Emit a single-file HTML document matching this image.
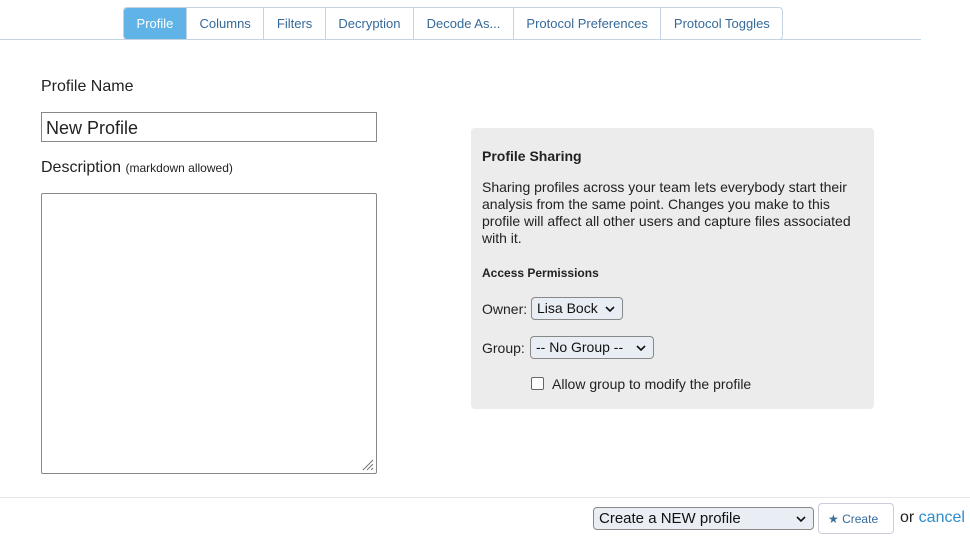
<!DOCTYPE html>
<html><head><meta charset="utf-8"><style>
*{box-sizing:border-box}
body{margin:0;width:970px;height:541px;background:#fff;font-family:"Liberation Sans",sans-serif;position:relative;overflow:hidden;color:#222}
.a{position:absolute}
.tabs{left:123px;top:7px;height:33px;display:flex;border:1px solid #c5d3e2;border-radius:4px;overflow:hidden}
.tabs div{font-size:13px;color:#356a9a;padding:0 12.55px;line-height:31px;border-right:1px solid #c5d3e2}
.tabs div:last-child{border-right:none}
.tabs .on{background:#5fb3e6;color:#fff}
.line{left:0;top:39px;width:921px;height:1px;background:#c5d3e2}
.sel{border:1px solid #888;border-radius:4px;background:#e9eef5;font-size:14px;color:#111;padding-left:5px;line-height:21px}
.sel svg{position:absolute;right:7px;top:8px}
</style></head><body>
<div class="a tabs"><div class="on">Profile</div><div>Columns</div><div>Filters</div><div>Decryption</div><div>Decode As...</div><div>Protocol Preferences</div><div>Protocol Toggles</div></div>
<div class="a line"></div>
<div class="a" style="left:41px;top:78px;font-size:16px">Profile Name</div>
<div class="a" style="left:41px;top:112px;width:336px;height:30px;border:1px solid #888;font-size:18px;padding:5px 4px">New Profile</div>
<div class="a" style="left:41px;top:159px;font-size:16px">Description <span style="font-size:12px">(markdown allowed)</span></div>
<div class="a" style="left:41px;top:193px;width:336px;height:281px;border:1px solid #888;border-radius:2px"></div>
<svg class="a" style="left:361px;top:458px" width="13" height="13"><path d="M12 2L2 12M12 6L6 12M12 10L10 12" stroke="#777"/></svg>
<div class="a" style="left:471px;top:128px;width:403px;height:281px;background:#ececec;border-radius:4px;padding:20px 11px;font-size:14px;line-height:17px">
<div style="font-weight:bold;font-size:14px;margin-bottom:14px">Profile Sharing</div>
<div style="font-size:14px;line-height:17px">Sharing profiles across your team lets everybody start their analysis from the same point. Changes you make to this profile will affect all other users and capture files associated with it.</div>
</div>
<div class="a" style="left:482px;top:266px;font-size:12px;font-weight:bold">Access Permissions</div>
<div class="a" style="left:482px;top:301px;font-size:14px">Owner:</div>
<div class="a sel" style="left:531px;top:297px;width:92px;height:23px">Lisa Bock<svg width="10" height="7"><path d="M1 1L5 5L9 1" stroke="#111" stroke-width="1.6" fill="none"/></svg></div>
<div class="a" style="left:482px;top:340px;font-size:14px">Group:</div>
<div class="a sel" style="left:530px;top:336px;width:124px;height:23px">-- No Group --<svg width="10" height="7"><path d="M1 1L5 5L9 1" stroke="#111" stroke-width="1.6" fill="none"/></svg></div>
<div class="a" style="left:531px;top:377px;width:13px;height:13px;border:1px solid #666;border-radius:2px;background:#fff"></div>
<div class="a" style="left:552px;top:376px;font-size:14px">Allow group to modify the profile</div>
<div class="a" style="left:0;top:497px;width:970px;height:1px;background:#e6e6e6"></div>
<div class="a sel" style="left:593px;top:507px;width:221px;height:23px;font-size:15px;line-height:22px">Create a NEW profile<svg width="10" height="7"><path d="M1 1L5 5L9 1" stroke="#111" stroke-width="1.6" fill="none"/></svg></div>
<div class="a" style="left:818px;top:503px;width:76px;height:31px;border:1px solid #ccd;border-radius:4px;font-size:12px;color:#356a9a;line-height:31px;padding-left:9px"><span style="color:#3a6d99">★</span> Create</div>
<div class="a" style="left:900px;top:509px;font-size:16px">or <span style="color:#2c8ccc">cancel</span></div>
</body></html>
